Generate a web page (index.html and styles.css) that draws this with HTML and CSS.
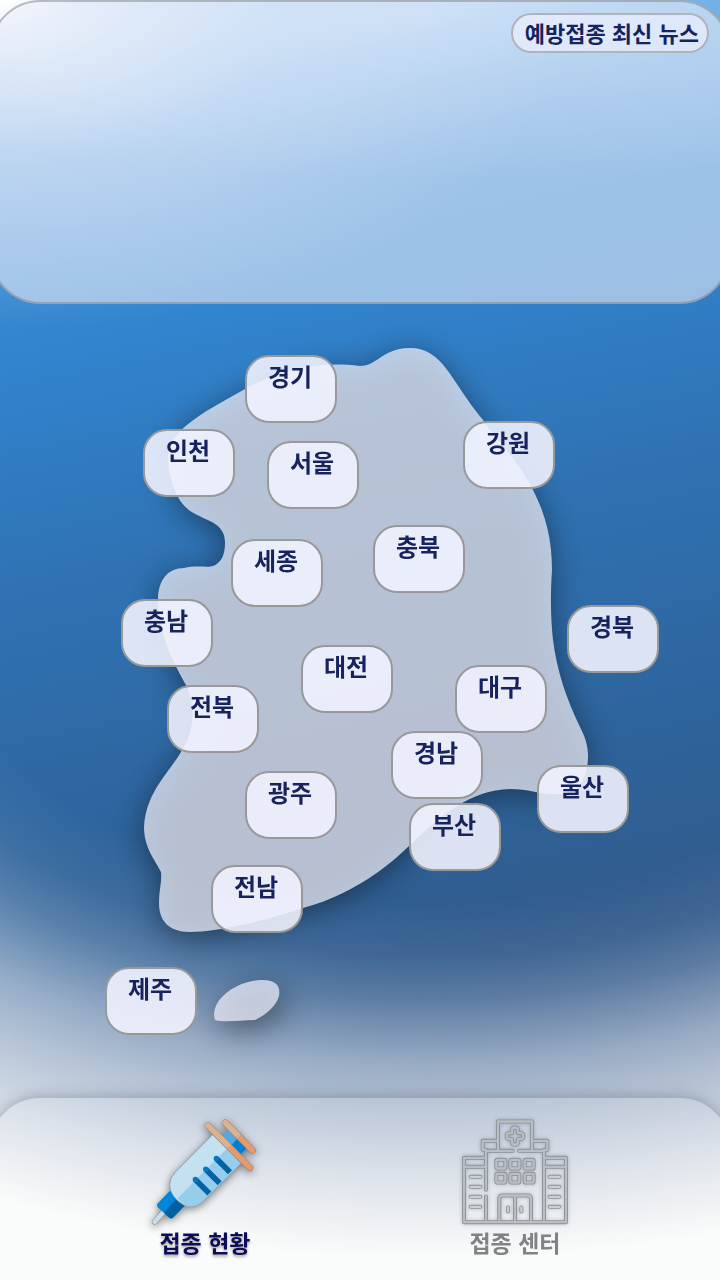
FILE: index.html
```html
<!DOCTYPE html>
<html lang="ko">
<head>
<meta charset="utf-8">
<meta name="viewport" content="width=device-width, initial-scale=1">
<title>접종 현황</title>
<link rel="stylesheet" href="styles.css">
</head>
<body>
<div class="app">
  <header class="news">
    <button class="news-button" type="button">예방접종 최신 뉴스</button>
  </header>

  <main class="map">
    <svg class="map-shape" viewBox="0 304 720 794" aria-hidden="true">
      <defs>
        <filter id="soft" x="-20%" y="-20%" width="140%" height="140%"><feGaussianBlur stdDeviation="15"/></filter>
        <path id="land" d="M360 366C377 366 383 348 410 348C443 348 450 380 483 420C500 445 522 465 533 490C546 515 552 540 552 570C550 600 551 620 553 640C557 672 567 700 580 727C588 742 588 752 588 758C587 782 577 794 558 794C540 795 530 789 510 789C470 790 442 815 410 845C383 872 345 897 303 908C270 919 220 932 190 932C168 932 159 920 159 903C159 890 162 882 161 872C155 860 144 848 144 827C146 790 172 770 182 750C192 736 197 712 187 687C172 660 158 632 158 600C158 580 168 568 184 568C196 565 208 568 213 566C221 563 225 555 225 543C225 533 221 527 212 522C198 515 186 512 178 497C172 485 168 472 168 455C170 428 210 409 245 389C275 374 310 360 360 366Z"/>
        <path id="island" d="M215 1020C209 1000 237 980 262 980C276 980 281 986 279 996C276 1006 267 1014 255 1020C240 1020 225 1023 215 1020Z"/>
      </defs>
      <g class="land-shadow" filter="url(#soft)">
        <use href="#land" y="5"/>
        <use href="#island" x="4" y="9"/>
      </g>
      <use class="land" href="#land"/>
      <use class="land" href="#island"/>
    </svg>

    <button type="button" class="pin" style="--x:245;--y:51">경기</button>
    <button type="button" class="pin" style="--x:143;--y:125">인천</button>
    <button type="button" class="pin" style="--x:267;--y:137">서울</button>
    <button type="button" class="pin" style="--x:463;--y:117">강원</button>
    <button type="button" class="pin" style="--x:231;--y:235">세종</button>
    <button type="button" class="pin" style="--x:373;--y:221">충북</button>
    <button type="button" class="pin" style="--x:121;--y:295">충남</button>
    <button type="button" class="pin" style="--x:567;--y:301">경북</button>
    <button type="button" class="pin" style="--x:301;--y:341">대전</button>
    <button type="button" class="pin" style="--x:455;--y:361">대구</button>
    <button type="button" class="pin" style="--x:167;--y:381">전북</button>
    <button type="button" class="pin" style="--x:391;--y:427">경남</button>
    <button type="button" class="pin" style="--x:245;--y:467">광주</button>
    <button type="button" class="pin" style="--x:537;--y:461">울산</button>
    <button type="button" class="pin" style="--x:409;--y:499">부산</button>
    <button type="button" class="pin" style="--x:211;--y:561">전남</button>
    <button type="button" class="pin" style="--x:105;--y:663">제주</button>
  </main>

  <nav class="tabs">
    <button type="button" class="tab tab-active" aria-current="page">
      <svg class="tab-icon" viewBox="60 85 330 320" aria-hidden="true">
        <path d="M74 396L102 365" stroke="#7c8994" stroke-width="17" stroke-linecap="round"/>
        <path d="M74 396L102 365" stroke="#cddce5" stroke-width="14" stroke-linecap="round"/>
        <path d="M120 303L82 342Q79 348 84 353L118 384Q124 388 130 382L165 346Z" fill="#0084dc"/>
        <path d="M142 323L102 369L118 384Q124 388 130 382L165 346Z" fill="#0060a0"/>
        <path d="M294 119L350 175L326 200L270 144Z" fill="#52a9de"/>
        <path d="M322 147L350 175L326 200L298 172Z" fill="#007fd3"/>
        <path d="M248 134L334 219L220 333Q202 350 182 350Q160 350 142 332Q119 310 119 285Q119 265 134 249Z" fill="#c4e1f2" stroke="#7c8994" stroke-width="2"/>
        <path d="M291 176L334 219L220 333Q202 350 182 350Q160 350 143 325Z" fill="#97cdec"/>
        <g stroke="#0063a4" stroke-width="17"><path d="M196 269L238 311M227 238L269 280M259 206L300 247"/></g>
        <g fill="#0079cb"><circle cx="196" cy="269" r="8"/><circle cx="227" cy="238" r="8"/><circle cx="259" cy="206" r="8"/></g>
        <g stroke-linecap="round">
          <path d="M286 99L368 182M234 107L360 234" stroke="#8a7f80" stroke-width="20"/>
          <path d="M286 99L368 182M234 107L360 234" stroke="#e39b6c" stroke-width="17"/>
          <path d="M286 99L322 135M234 107L292 165" stroke="#d9b391" stroke-width="17"/>
        </g>
      </svg>
      <span class="tab-label">접종 현황</span>
    </button>
    <button type="button" class="tab">
      <svg class="tab-icon" viewBox="60 85 330 320" aria-hidden="true">
        <defs>
          <g id="hospital">
            <path d="M174 180V95H276V180M144 183H218M237 183H308M174 153H128V180H138V300M276 153H322V180H312V390M134 204H72V397H378V204H318M72 231H134M318 231H378M138 320V390M72 397H378M178 392V326Q178 317 188 317H263Q273 317 273 326V392M225 320V392"/>
            <path d="M216 128V122Q216 113 225 113T234 122V130H242Q250 130 250 139T242 148H234V156Q234 165 225 165T216 156V148H208Q200 148 200 139T208 130H216Z"/>
            <rect x="169" y="210" width="27" height="26" rx="4"/><rect x="211" y="210" width="27" height="26" rx="4"/><rect x="254" y="210" width="27" height="26" rx="4"/>
            <rect x="169" y="252" width="27" height="26" rx="4"/><rect x="211" y="252" width="27" height="26" rx="4"/><rect x="254" y="252" width="27" height="26" rx="4"/>
          </g>
          <path id="slots" d="M92 261H121M92 291H121M92 321H121M92 351H121M329 261H358M329 291H358M329 321H358M329 351H358M204 353V365M244 353V365"/>
        </defs>
        <g fill="none" stroke-linejoin="round" stroke-linecap="round">
          <use href="#hospital" stroke="#8b9096" stroke-width="12"/>
          <use href="#hospital" stroke="#b9bec4" stroke-width="7"/>
          <use href="#slots" stroke="#8b9096" stroke-width="12"/>
          <use href="#slots" stroke="#ccd0d4" stroke-width="7"/>
        </g>
      </svg>
      <span class="tab-label">접종 센터</span>
    </button>
  </nav>
</div>
</body>
</html>
```
FILE: styles.css
```css
* {
  box-sizing: border-box;
}

body {
  margin: 0;
  font-family: "Noto Sans CJK KR", sans-serif;
}

button {
  margin: 0;
  font: inherit;
  cursor: pointer;
}

.app {
  display: flex;
  flex-direction: column;
  min-height: 100vh;
  overflow: hidden;
  background:
    radial-gradient(ellipse 80% 26% at 0 0, #fff 0, rgba(255, 255, 255, 0.66) 22%, rgba(255, 255, 255, 0.3) 50%, rgba(255, 255, 255, 0.1) 80%, transparent 100%),
    radial-gradient(ellipse 110% 14% at 60% 0, rgba(220, 238, 255, 0.6) 0, rgba(220, 238, 255, 0.28) 45%, transparent 100%),
    radial-gradient(ellipse 153% 100% at 60% 0, transparent 46%, rgba(240, 244, 248, 0.08) 54%, rgba(240, 244, 248, 0.22) 60%, rgba(242, 245, 249, 0.52) 69%, rgba(245, 247, 250, 0.65) 75%, rgba(250, 251, 252, 0.84) 86%, #fafbfb 97%) 0 100% / 100% 55% no-repeat,
    linear-gradient(168deg, #4a9ade 0, #3184ce 25%, #2f72b3 42%, #2e6299 62%, #315a8b 74%, #3c5680 100%);
}

.news {
  display: flex;
  justify-content: flex-end;
  align-items: flex-start;
  height: 304px;
  margin: 0 -10px;
  padding: 11px 19px;
  border: 2px solid rgba(130, 130, 130, 0.5);
  border-radius: 50px;
  background: rgba(235, 238, 250, 0.58);
}

.news-button {
  height: 40px;
  padding: 0 8px 2px 12px;
  border: 2px solid rgba(150, 150, 150, 0.65);
  border-radius: 20px;
  background: rgba(240, 242, 255, 0.65);
  color: #17235c;
  font-size: 22px;
  font-weight: 700;
  line-height: 32px;
  white-space: nowrap;
}

.map {
  position: relative;
  aspect-ratio: 720 / 794;
}

.map-shape {
  display: block;
  width: 100%;
  height: 100%;
  overflow: visible;
}

.land-shadow {
  fill: #000;
  opacity: 0.42;
}

.land {
  fill: rgba(235, 238, 250, 0.75);
}

.pin {
  position: absolute;
  left: calc(var(--x) / 720 * 100%);
  top: calc(var(--y) / 794 * 100%);
  display: flex;
  justify-content: center;
  width: 92px;
  height: 68px;
  padding: 3px 2px 0 0;
  border: 2px solid #999;
  border-radius: 24px;
  background: rgba(242, 243, 254, 0.89);
  color: #17235c;
  font-size: 24px;
  font-weight: 700;
  line-height: 32px;
}

.tabs {
  position: relative;
  display: grid;
  flex: 1;
  grid-template-columns: 1fr 1fr;
  margin: 0 -10px;
  padding: 20px 60px;
  border-radius: 50px 50px 0 0;
  background: rgba(253, 254, 254, 0.12);
  box-shadow: 0 0 16px rgba(70, 80, 95, 0.45);
}

.tab {
  display: flex;
  flex-direction: column;
  align-items: center;
  padding: 0;
  border: 0;
  background: none;
  color: #808285;
  font-size: 23px;
  font-weight: 700;
  line-height: 34px;
}

.tab-active {
  color: #0c0c58;
  text-shadow: 0 2px 3px rgba(0, 0, 0, 0.35);
}

.tab-icon {
  width: 110px;
  height: 107px;
  fill: none;
  filter: drop-shadow(0 0 2px rgba(60, 70, 80, 0.3));
}

.tab-active .tab-icon {
  filter: drop-shadow(0 2px 4px rgba(0, 0, 0, 0.5));
}
```
